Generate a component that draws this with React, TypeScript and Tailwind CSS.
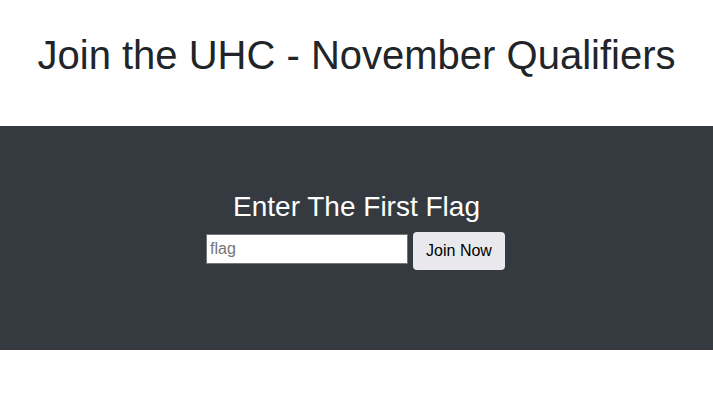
export default function App() {
  return (
    <div className="min-h-[420px] bg-white font-['Liberation_Sans',Arial,sans-serif]">
      <header className="pt-[31px] pb-[47px] text-center">
        <h1 className="text-[40px] leading-[48px] text-[#212529]">
          Join the UHC - November Qualifiers
        </h1>
      </header>

      <section className="h-[224px] bg-[#343a40] pt-[64px] flex flex-col items-center">
        <h2 className="text-[28px] leading-[34px] text-white mb-[8px]">
          Enter The First Flag
        </h2>
        <form className="flex items-start gap-[5px] mr-[2px]" onSubmit={(e) => e.preventDefault()}>
          <input
            type="text"
            placeholder="flag"
            className="mt-[2px] w-[202px] h-[30px] bg-white border border-[#767676] px-[3px] text-[16px] text-black placeholder:text-[#757575] outline-none"
          />
          <button
            type="submit"
            className="w-[92px] h-[38px] rounded-[4px] bg-[#e9e9ed] text-[16px] text-black"
          >
            Join Now
          </button>
        </form>
      </section>
    </div>
  );
}
